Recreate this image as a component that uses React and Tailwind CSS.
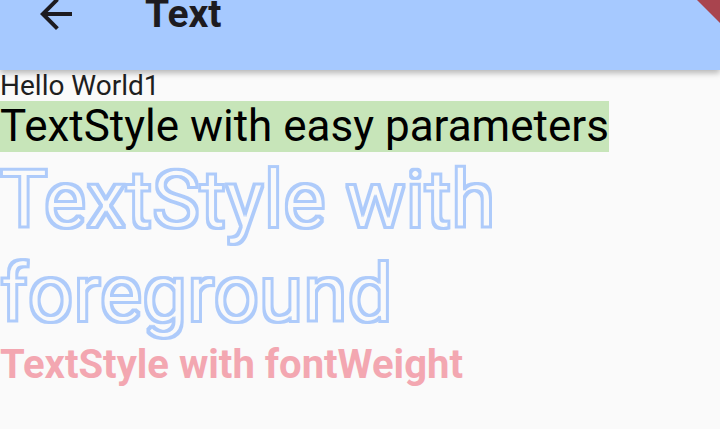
import React from "react";

const BackArrow = () => (
  <svg width="48" height="48" viewBox="0 0 24 24" className="shrink-0">
    <path
      d="M20 11H7.83l5.59-5.59L12 4l-8 8 8 8 1.41-1.41L7.83 13H20v-2z"
      fill="#1d1b20"
    />
  </svg>
);

// outline filter: ring = dilate - erode, so overlapping glyph contours don't show
const OutlineFilter = () => (
  <svg width="0" height="0" className="absolute">
    <filter id="outline" x="-5%" y="-5%" width="110%" height="110%">
      <feMorphology in="SourceAlpha" operator="dilate" radius="1.6" result="d" />
      <feMorphology in="SourceAlpha" operator="erode" radius="1.4" result="e" />
      <feComposite in="d" in2="e" operator="out" result="ring" />
      <feFlood floodColor="#aecbfa" />
      <feComposite in2="ring" operator="in" />
    </filter>
  </svg>
);

const App = () => {
  return (
    <div className="w-[720px] h-[429px] overflow-hidden bg-[#fafafa] font-['Roboto',sans-serif] relative">
      <OutlineFilter />
      {/* App bar */}
      <div className="relative z-10 flex flex-col h-[70px] bg-[#a6c9ff] shadow-[0_3px_6px_rgba(0,0,0,0.28)]">
        <div className="flex items-center -mt-[10px] pl-[32px]">
          <BackArrow />
          <span className="ml-[65px] text-[39px] leading-[48px] font-bold text-[#1d1b20]">
            Text
          </span>
        </div>
        {/* debug banner corner */}
        <div className="absolute top-0 right-0 w-[23px] h-[23px] bg-[#a9444e] [clip-path:polygon(0_0,100%_0,100%_100%)]"></div>
      </div>

      {/* Body */}
      <div className="flex flex-col items-start">
        <p className="text-[28px] leading-[31px] text-[#1f1f1f]">Hello World1</p>
        <p className="text-[44px] leading-[51px] text-black bg-[#c7e5b9]">
          TextStyle with easy parameters
        </p>
        <p className="mt-[1px] text-[80px] leading-[94px] text-black [filter:url(#outline)] w-[560px]">
          TextStyle with foreground
        </p>
        <p className="mt-[1px] text-[40px] leading-[46px] font-bold text-[#f3a7b1]">
          TextStyle with fontWeight
        </p>
      </div>
    </div>
  );
};

export default App;
